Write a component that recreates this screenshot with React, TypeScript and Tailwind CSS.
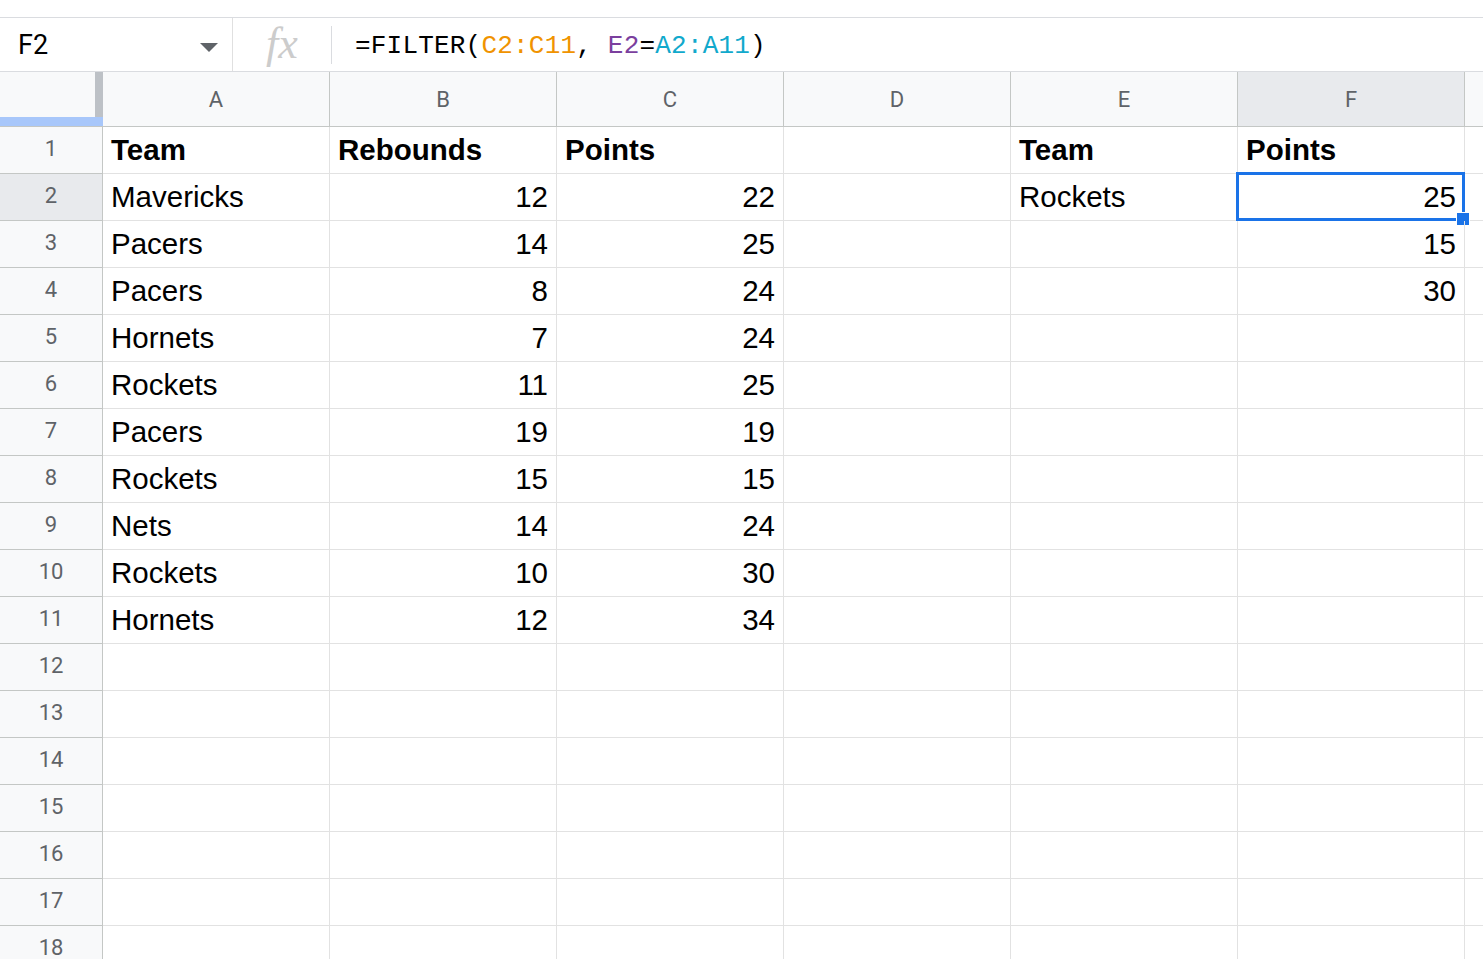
import React from 'react'

const cols = ['A', 'B', 'C', 'D', 'E', 'F']

type Cell = { v: string; bold?: boolean; num?: boolean }

const data: Record<number, Record<string, Cell>> = {
  1: { A: { v: 'Team', bold: true }, B: { v: 'Rebounds', bold: true }, C: { v: 'Points', bold: true }, E: { v: 'Team', bold: true }, F: { v: 'Points', bold: true } },
  2: { A: { v: 'Mavericks' }, B: { v: '12', num: true }, C: { v: '22', num: true }, E: { v: 'Rockets' }, F: { v: '25', num: true } },
  3: { A: { v: 'Pacers' }, B: { v: '14', num: true }, C: { v: '25', num: true }, F: { v: '15', num: true } },
  4: { A: { v: 'Pacers' }, B: { v: '8', num: true }, C: { v: '24', num: true }, F: { v: '30', num: true } },
  5: { A: { v: 'Hornets' }, B: { v: '7', num: true }, C: { v: '24', num: true } },
  6: { A: { v: 'Rockets' }, B: { v: '11', num: true }, C: { v: '25', num: true } },
  7: { A: { v: 'Pacers' }, B: { v: '19', num: true }, C: { v: '19', num: true } },
  8: { A: { v: 'Rockets' }, B: { v: '15', num: true }, C: { v: '15', num: true } },
  9: { A: { v: 'Nets' }, B: { v: '14', num: true }, C: { v: '24', num: true } },
  10: { A: { v: 'Rockets' }, B: { v: '10', num: true }, C: { v: '30', num: true } },
  11: { A: { v: 'Hornets' }, B: { v: '12', num: true }, C: { v: '34', num: true } },
}

const rows = Array.from({ length: 18 }, (_, i) => i + 1)

function FormulaBar() {
  return (
    <div className="mt-[17px] h-[55px] flex items-center border-t border-b border-[#dadce0] bg-white">
      <div className="w-[233px] h-full flex items-center justify-between pl-[18px] pr-[14px] border-r border-[#e0e0e0] text-[27px] text-[#000] font-['Roboto',sans-serif]">
        <span className="mt-[2px]">F2</span>
        <svg width="18" height="10" viewBox="0 0 18 10" className="mt-[6px]">
          <path d="M0 0 L18 0 L9 9 Z" fill="#5f6368" />
        </svg>
      </div>
      <div className="w-[99px] h-[38px] flex items-center justify-center border-r border-[#dadce0]">
        <span className="text-[44px] italic text-[#cccccc] font-['Liberation_Serif',serif] leading-none -mt-[2px]">fx</span>
      </div>
      <div className="pl-[23px] mt-[3px] text-[26px] font-['Liberation_Mono',monospace] text-[#000] tracking-[0.2px]">
        =FILTER(<span className="text-[#f09300]">C2:C11</span>, <span className="text-[#7b3f9e]">E2</span>=<span className="text-[#11a9cc]">A2:A11</span>)
      </div>
    </div>
  )
}

function HeaderRow() {
  return (
    <div className="flex h-[55px] border-b border-[#c4c7c5]">
      <div className="relative w-[103px] h-full bg-[#f8f9fa] shrink-0">
        <div className="absolute right-0 top-0 w-[8px] h-[46px] bg-[#bdc1c6]" />
        <div className="absolute left-0 bottom-0 w-full h-[9px] bg-[#a8c7fa]" />
      </div>
      {cols.map((c) => (
        <div
          key={c}
          className={`w-[227px] shrink-0 h-full flex items-center justify-center border-r border-[#c4c7c5] text-[22px] text-[#5f6368] font-['Roboto',sans-serif] ${c === 'F' ? 'bg-[#e8eaed]' : 'bg-[#f8f9fa]'}`}
        >
          {c}
        </div>
      ))}
      <div className="flex-1 h-full bg-[#f8f9fa]" />
    </div>
  )
}

function GridRow({ r }: { r: number }) {
  const row = data[r] || {}
  return (
    <div className="flex h-[47px]">
      <div
        className={`w-[103px] shrink-0 h-full flex items-center justify-center border-r border-b border-[#c4c7c5] text-[22px] text-[#5f6368] font-['Roboto',sans-serif] ${r === 2 ? 'bg-[#e8eaed]' : 'bg-[#f8f9fa]'}`}
      >
        <span className="-mt-[3px]">{r}</span>
      </div>
      {cols.map((c) => {
        const cell = row[c]
        const selected = r === 2 && c === 'F'
        return (
          <div
            key={c}
            className={`relative w-[227px] shrink-0 h-full flex items-center border-r border-b border-[#e2e2e2] px-[8px] text-[29.5px] text-black font-['Liberation_Sans',Arial,sans-serif] ${cell?.num ? 'justify-end' : 'justify-start'} ${cell?.bold ? 'font-bold' : ''}`}
          >
            {cell && <span className="pt-[1px]">{cell.v}</span>}
            {selected && (
              <>
                <div className="absolute -left-[2px] -top-[2px] -right-[1px] -bottom-[1px] border-[3px] border-[#1a73e8] pointer-events-none" />
                <div className="absolute -right-[6px] -bottom-[6px] w-[14px] h-[14px] bg-[#1a73e8] border border-white" />
              </>
            )}
          </div>
        )
      })}
      <div className="flex-1 h-full border-b border-[#e2e2e2]" />
    </div>
  )
}

export default function App() {
  return (
    <div className="w-[1483px] h-[959px] overflow-hidden bg-white">
      <FormulaBar />
      <HeaderRow />
      {rows.map((r) => (
        <GridRow key={r} r={r} />
      ))}
    </div>
  )
}
